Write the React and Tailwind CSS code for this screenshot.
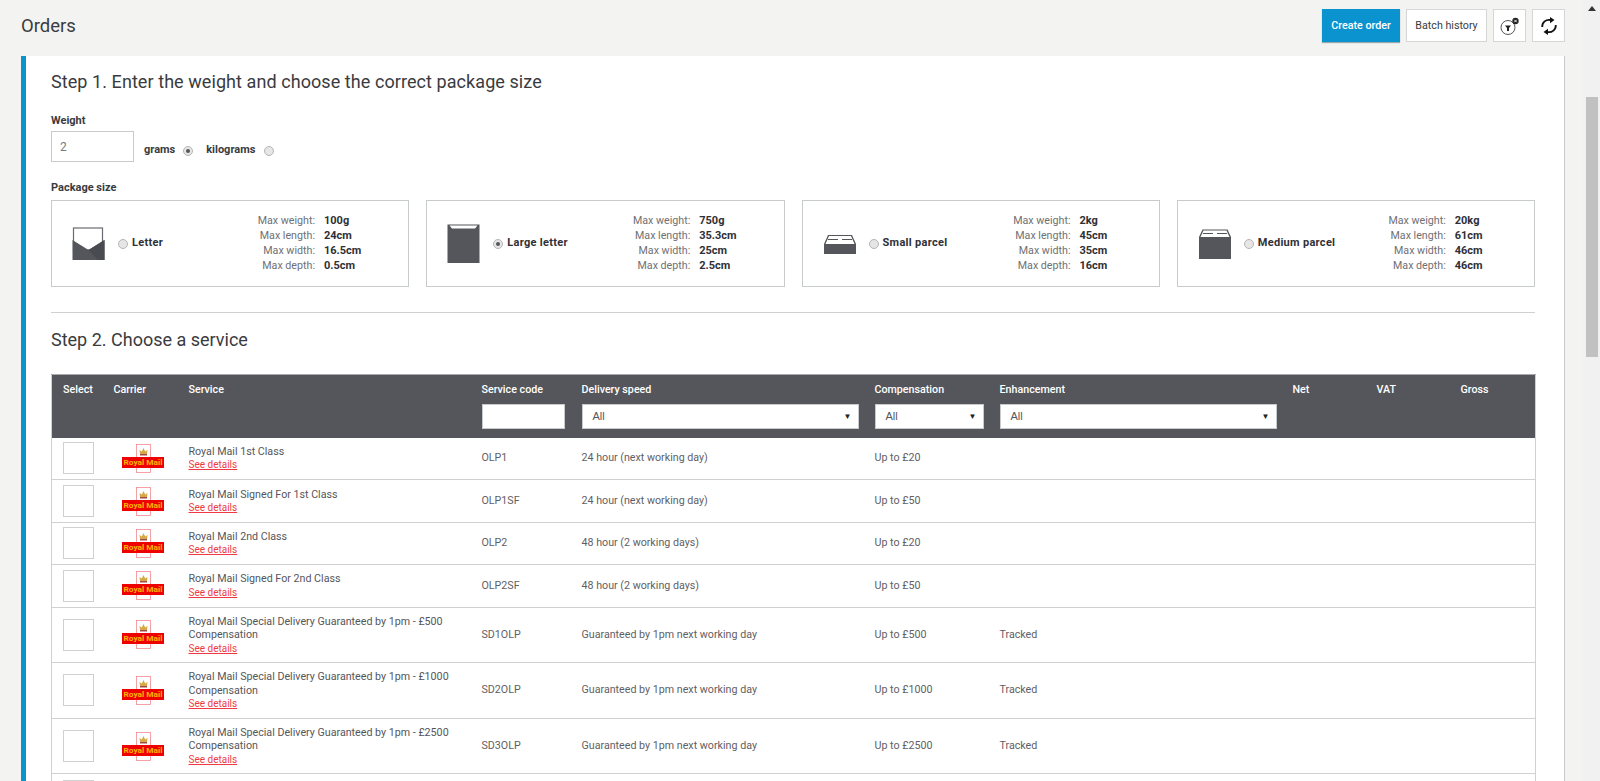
import React from 'react';

const font = { fontFamily: 'Roboto, sans-serif' };

const packages = [
    { name: 'Letter', icon: 'letter', checked: false, specs: ['100g', '24cm', '16.5cm', '0.5cm'], specClass: '' },
    { name: 'Large letter', icon: 'large', checked: true, specs: ['750g', '35.3cm', '25cm', '2.5cm'], specClass: '' },
    { name: 'Small parcel', icon: 'small', checked: false, specs: ['2kg', '45cm', '35cm', '16cm'], specClass: 'ml-[5px]' },
    { name: 'Medium parcel', icon: 'medium', checked: false, specs: ['20kg', '61cm', '46cm', '46cm'], specClass: 'ml-[5px]' },
];

const specLabels = ['Max weight:', 'Max length:', 'Max width:', 'Max depth:'];

const services = [
    { name: 'Royal Mail 1st Class', code: 'OLP1', speed: '24 hour (next working day)', comp: 'Up to £20' },
    { name: 'Royal Mail Signed For 1st Class', code: 'OLP1SF', speed: '24 hour (next working day)', comp: 'Up to £50' },
    { name: 'Royal Mail 2nd Class', code: 'OLP2', speed: '48 hour (2 working days)', comp: 'Up to £20' },
    { name: 'Royal Mail Signed For 2nd Class', code: 'OLP2SF', speed: '48 hour (2 working days)', comp: 'Up to £50' },
    { name: 'Royal Mail Special Delivery Guaranteed by 1pm - £500 Compensation', code: 'SD1OLP', speed: 'Guaranteed by 1pm next working day', comp: 'Up to £500', enh: 'Tracked' },
    { name: 'Royal Mail Special Delivery Guaranteed by 1pm - £1000 Compensation', code: 'SD2OLP', speed: 'Guaranteed by 1pm next working day', comp: 'Up to £1000', enh: 'Tracked' },
    { name: 'Royal Mail Special Delivery Guaranteed by 1pm - £2500 Compensation', code: 'SD3OLP', speed: 'Guaranteed by 1pm next working day', comp: 'Up to £2500', enh: 'Tracked' },
];

const Radio = ({ checked }) => (
    <span className="flex h-[10px] w-[10px] shrink-0 items-center justify-center rounded-full border border-[#b5b5b5] bg-[#e6e6e6]">
        {checked && <span className="h-[4px] w-[4px] rounded-full bg-[#55565b]"></span>}
    </span>
);

const PackageIcon = ({ type }) => {
    if (type === 'letter') {
        return (
            <svg width="33" height="34" viewBox="0 0 33 34">
                <rect x="1.5" y="1" width="29" height="22" fill="#fff" stroke="#6a6b70" strokeWidth="1.2" />
                <path d="M0.5 13 L16.5 23 L32.5 13 V33 H0.5 Z" fill="#55565b" />
                <path d="M16.5 23 L32.5 13 V33 H26 Z" fill="#4a4b50" />
            </svg>
        );
    }
    if (type === 'large') {
        return (
            <svg width="33" height="39" viewBox="0 0 33 39">
                <path d="M0.5 0.5 H32.5 V39 H0.5 Z" fill="#55565b" />
                <path d="M2.5 1.5 H30.5 L28 4.5 H5 Z" fill="#fff" />
            </svg>
        );
    }
    if (type === 'small') {
        return (
            <svg width="34" height="20" viewBox="0 0 34 20">
                <path d="M1 10 L5 1 H29 L33 10 V20 H1 Z" fill="#55565b" />
                <path d="M2.5 10 L6 2 H28 L31.5 10 Z" fill="#fff" />
                <path d="M5 5.5 H15 M19 5.5 H29" stroke="#55565b" strokeWidth="1" />
            </svg>
        );
    }
    return (
        <svg width="34" height="30" viewBox="0 0 34 30">
            <path d="M1 8 L4.5 0.5 H29.5 L33 8 V30 H1 Z" fill="#55565b" />
            <path d="M2.5 8 L5.5 1.5 H28.5 L31.5 8 Z" fill="#fff" />
            <path d="M5 4.5 H15 M19 4.5 H29" stroke="#55565b" strokeWidth="1" />
        </svg>
    );
};

const PackageCard = ({ item }) => (
    <div className="flex h-[87px] flex-1 items-center border border-[#c8cbcb] bg-white pl-[20px]">
        <div className="flex w-[46px] shrink-0">
            <PackageIcon type={item.icon} />
        </div>
        <div className="flex w-[135px] shrink-0 items-center gap-[4px] text-[11px] font-bold tracking-[0.3px] text-[#2f3036]">
            <Radio checked={item.checked} />
            <span>{item.name}</span>
        </div>
        <div className={`mb-[2px] grid grid-cols-[62px_auto] justify-start gap-x-[9px] leading-[15px] ${item.specClass}`}>
            {specLabels.map((label, i) => (
                <React.Fragment key={label}>
                    <span className="text-right text-[10.7px] text-[#6f7074]">{label}</span>
                    <span className="text-[11px] font-bold text-[#2f3036]">{item.specs[i]}</span>
                </React.Fragment>
            ))}
        </div>
    </div>
);

const Select = ({ className }) => (
    <div className={`flex h-[25px] items-center justify-between border border-[#c8cbcb] bg-white pl-[10px] pr-[6px] font-['Liberation_Sans'] text-[11px] text-[#55565b] ${className}`}>
        <span>All</span>
        <span className="text-[8px] text-[#222]">▼</span>
    </div>
);

const RoyalMailLogo = () => (
    <svg className="block" width="42" height="29" viewBox="0 0 42 29">
        <rect x="14.5" y="0.5" width="14" height="28" fill="#fff" stroke="#f08a8f" strokeWidth="0.8" />
        <path d="M18 10 L17.5 6 L19.8 7.6 L21.5 4 L23.2 7.6 L25.5 6 L25 10 Z" fill="#d4a94a" />
        <rect x="18" y="10" width="7" height="1.5" fill="#a8484a" />
        <rect x="0" y="13" width="42" height="11" fill="#ee0000" />
        <text x="21" y="21.3" textAnchor="middle" fontSize="8" fontWeight="700" fill="#ffb400" textLength="39" lengthAdjust="spacingAndGlyphs" style={font}>Royal Mail</text>
    </svg>
);

const ServiceRow = ({ row }) => {
    const tall = row.name.length > 40;
    return (
        <tr className="border-b border-[#d0d2d2] text-[10.7px] text-[#5f6064]">
            <td className={tall ? 'h-[55.6px] pl-[11px] align-middle' : 'h-[42.4px] pl-[11px] align-middle'}>
                <div className="h-[32px] w-[31px] border border-[#cfd1d1] bg-white"></div>
            </td>
            <td className="align-middle">
                <div className="pl-[8px]"><RoyalMailLogo /></div>
            </td>
            <td className="pr-[20px] align-middle leading-[13.5px]">
                <div className="text-[#55565b]">{row.name}</div>
                <a className="text-[10px] text-[#ee3b43] underline">See details</a>
            </td>
            <td className="align-middle">{row.code}</td>
            <td className="align-middle">{row.speed}</td>
            <td className="align-middle">{row.comp}</td>
            <td className="align-middle" colSpan="4">{row.enh}</td>
        </tr>
    );
};

const App = () => {
    return (
        <div className="flex h-[781px] overflow-hidden bg-[#f3f3f2]" style={font}>
            <div className="flex min-w-0 flex-1 flex-col">
                {/* Top bar */}
                <header className="flex h-[56px] shrink-0 items-start justify-between pl-[21px] pr-[18px] pt-[9px]">
                    <h1 className="mt-[5px] text-[18.5px] font-normal leading-[24px] text-[#3a3b40]">Orders</h1>
                    <div className="flex gap-[6px]">
                        <button className="h-[33px] w-[78px] bg-[#0b93cf] pt-[2px] text-[10.7px] font-medium text-white shadow-[0_1px_1px_#9aa]">Create order</button>
                        <button className="h-[33px] w-[81px] border border-[#d5d6d6] bg-white pt-[2px] text-[10.7px] text-[#3a3b40]">Batch history</button>
                        <button className="flex h-[33px] w-[33px] items-center justify-center border border-[#d5d6d6] bg-white">
                            <svg width="20" height="20" viewBox="0 0 20 20">
                                <circle cx="8" cy="11.5" r="7" fill="none" stroke="#555" strokeWidth="1" />
                                <path d="M5 9.5 H11 L9 12 V15 H7 V12 Z" fill="#222" />
                                <circle cx="15.5" cy="5" r="3.2" fill="#222" />
                                <path d="M14.3 3.8 L16.7 6.2 M16.7 3.8 L14.3 6.2" stroke="#fff" strokeWidth="0.9" />
                            </svg>
                        </button>
                        <button className="flex h-[33px] w-[33px] items-center justify-center border border-[#d5d6d6] bg-white">
                            <svg width="18" height="18" viewBox="0 0 18 18" fill="none" stroke="#111" strokeWidth="1.8">
                                <path d="M2.2 10 A6.8 6.8 0 0 1 10.5 3" />
                                <path d="M15.8 8 A6.8 6.8 0 0 1 7.5 15" />
                                <path d="M10 0 L14.5 3 L10 6.2 Z" fill="#111" stroke="none" />
                                <path d="M8 11.8 L3.5 15 L8 18 Z" fill="#111" stroke="none" />
                            </svg>
                        </button>
                    </div>
                </header>

                {/* Main card */}
                <main className="ml-[21px] mr-[18px] flex-1 border-l-[5px] border-r border-l-[#0b93cf] border-r-[#c8cbcb] bg-white pl-[25px] pr-[29px]">
                    <h2 className="mt-[14px] text-[18px] font-normal leading-[24px] tracking-[0.07px] text-[#3a3b40]">Step 1. Enter the weight and choose the correct package size</h2>

                    <label className="mt-[20px] block text-[11px] font-bold leading-[14px] text-[#3a3b40]">Weight</label>
                    <div className="mt-[3px] flex items-center">
                        <div className="flex h-[31px] w-[83px] items-center border border-[#c8cbcb] pl-[8px] text-[12px] text-[#77787c]">2</div>
                        <div className="mt-[8px] flex items-center text-[11px] font-bold text-[#3a3b40]">
                            <span className="ml-[10px]">grams</span>
                            <span className="ml-[8px] flex"><Radio checked /></span>
                            <span className="ml-[13px]">kilograms</span>
                            <span className="ml-[9px] flex"><Radio /></span>
                        </div>
                    </div>

                    <label className="mt-[19px] block text-[11px] font-bold leading-[14px] text-[#3a3b40]">Package size</label>
                    <div className="mt-[5px] flex gap-[17px]">
                        {packages.map((item) => (
                            <PackageCard key={item.name} item={item} />
                        ))}
                    </div>

                    <hr className="mt-[25px] border-[#d0d2d2]" />

                    <h2 className="mt-[15px] text-[18px] font-normal leading-[24px] text-[#3a3b40]">Step 2. Choose a service</h2>

                    <table className="mt-[22px] w-full table-fixed border-collapse border-x border-[#d0d2d2]">
                        <colgroup>
                            <col className="w-[62px]" />
                            <col className="w-[75px]" />
                            <col className="w-[293px]" />
                            <col className="w-[100px]" />
                            <col className="w-[293px]" />
                            <col className="w-[125px]" />
                            <col className="w-[293px]" />
                            <col className="w-[84px]" />
                            <col className="w-[84px]" />
                            <col className="w-[75px]" />
                        </colgroup>
                        <thead>
                            <tr className="h-[63px] border-t border-[#aaa] bg-[#55565b] text-left align-top text-[10.7px] font-medium text-white">
                                <th className="pl-[11px] pt-[7px] font-medium">Select</th>
                                <th className="pt-[7px] font-medium">Carrier</th>
                                <th className="pt-[7px] font-medium">Service</th>
                                <th className="pt-[7px] font-medium">
                                    Service code
                                    <div className="mt-[6px] h-[25px] w-[83px] border border-[#c8cbcb] bg-white"></div>
                                </th>
                                <th className="pt-[7px] font-medium">
                                    Delivery speed
                                    <Select className="mt-[6px] w-[277px] font-normal" />
                                </th>
                                <th className="pt-[7px] font-medium">
                                    Compensation
                                    <Select className="mt-[6px] w-[109px] font-normal" />
                                </th>
                                <th className="pt-[7px] font-medium">
                                    Enhancement
                                    <Select className="mt-[6px] w-[277px] font-normal" />
                                </th>
                                <th className="pt-[7px] font-medium">Net</th>
                                <th className="pt-[7px] font-medium">VAT</th>
                                <th className="pt-[7px] font-medium">Gross</th>
                            </tr>
                        </thead>
                        <tbody>
                            {services.map((row) => (
                                <ServiceRow key={row.code} row={row} />
                            ))}
                            {/* next row is cut off by the fold, only its checkbox shows */}
                            <tr>
                                <td className="h-[43px] pl-[11px] align-middle" colSpan="10">
                                    <div className="h-[32px] w-[31px] border border-[#cfd1d1] bg-white"></div>
                                </td>
                            </tr>
                        </tbody>
                    </table>
                </main>
            </div>

            {/* Scrollbar */}
            <aside className="flex w-[17px] shrink-0 flex-col items-center bg-[#f1f1f1]">
                <svg className="mt-[6px]" width="8" height="5" viewBox="0 0 8 5">
                    <path d="M4 0 L8 5 H0 Z" fill="#333" />
                </svg>
                <div className="mt-[86px] h-[260px] w-[12px] bg-[#c1c1c1]"></div>
            </aside>
        </div>
    );
};

export default App;
